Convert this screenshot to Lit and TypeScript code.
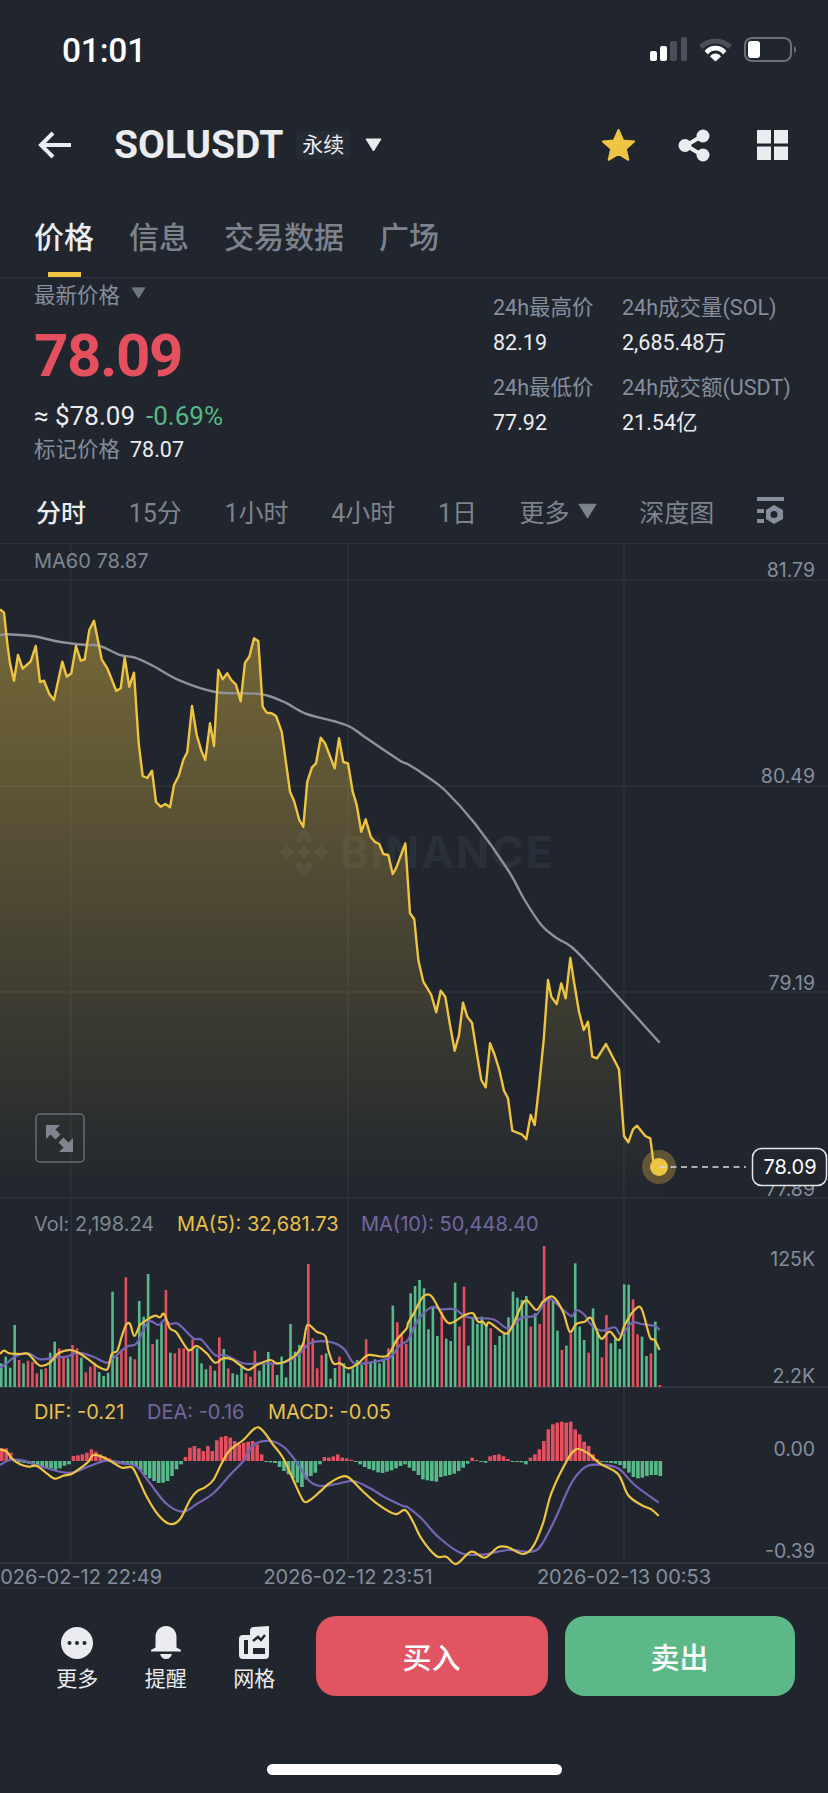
import { css, html, LitElement, svg } from "lit";
import { customElement } from "lit/decorators.js";

// series are read off zoomed crops: flat x,y lists, scaled 3x from an origin
const scale = (pts: number[], ox: number, oy: number) => {
	const out: [number, number][] = [];
	for (let i = 0; i < pts.length; i += 2) out.push([ox + pts[i] / 3, oy + pts[i + 1] / 3]);
	return out;
};
const toD = (pts: [number, number][]) =>
	"M" + pts.map(([x, y]) => `${x.toFixed(1)} ${y.toFixed(1)}`).join("L");

// averages are smooth in the app, so run them through a catmull-rom curve
const toCurve = (pts: [number, number][]) => {
	let d = `M${pts[0][0].toFixed(1)} ${pts[0][1].toFixed(1)}`;
	for (let i = 0; i < pts.length - 1; i++) {
		const p0 = pts[Math.max(i - 1, 0)];
		const p1 = pts[i];
		const p2 = pts[i + 1];
		const p3 = pts[Math.min(i + 2, pts.length - 1)];
		const c1x = p1[0] + (p2[0] - p0[0]) / 6;
		const c1y = p1[1] + (p2[1] - p0[1]) / 6;
		const c2x = p2[0] - (p3[0] - p1[0]) / 6;
		const c2y = p2[1] - (p3[1] - p1[1]) / 6;
		d += `C${c1x.toFixed(1)} ${c1y.toFixed(1)} ${c2x.toFixed(1)} ${c2y.toFixed(1)} ${p2[0].toFixed(1)} ${p2[1].toFixed(1)}`;
	}
	return d;
};

const price: [number, number][] = [
	...scale(
		[0,148,12,158,22,250,30,310,42,362,54,285,68,326,92,304,107,258,120,366,132,362,148,402,162,420,187,305,200,350,214,340,228,258,242,302,254,298,268,210,282,182,305,298,322,325,349,393,362,385,374,293,388,380,402,338,416,550,428,648,442,654,456,632,468,726,482,740,496,732,510,742,522,675,536,648,550,600,562,576,576,438,590,525,604,572,616,600,630,490,642,558,655,330,668,358,682,340,694,360,708,374,722,424,735,308,748,290,762,235,775,243,788,440,800,458,815,460,828,468,845,515,870,695,882,722,898,780,910,800,922,665,936,622,948,610,962,533,975,550,1004,625,1017,535,1030,606,1044,610,1058,695,1070,735,1084,815,1097,778,1112,830,1124,845,1138,852,1150,882,1165,885],
		0, 560,
	),
	...scale([38,132,48,115,76,40,90,250,103,268,115,390,130,455], 380, 830),
	...scale(
		[70,45,85,97,98,32,112,50,125,130,140,212,153,165,165,68,178,110,192,128,205,210,220,300,233,322,246,190,260,225,274,270,288,332,300,355,313,452,328,458,341,463,355,478,368,405,380,435,393,320,407,180,420,0,430,50,446,72,460,10,473,55,487,-66,497,0,513,95,527,150,540,125,553,230,567,235,594,192,633,268,648,468,661,487,675,448,687,437,712,468,727,475,738,560,753,562],
		408, 980,
	),
];

const ma60: [number, number][] = [
	...scale([0,225,20,223,60,225,110,230,165,243,210,250,260,255,300,258,360,285,405,293,460,318,540,362,650,397,780,402,850,425,915,460,1000,483,1050,500,1100,535,1200,602], 0, 560),
	...scale([0,253,50,285,110,330,200,430,300,570,350,660,400,735,440,770,490,800,530,840,585,900], 408, 680),
	...scale([755,188], 408, 980),
];

// top of each volume bar in crop px, negative means a red bar
const volume = [
	490,470,503,375,-480,490,-482,-486,-520,508,-505,458,425,-445,-470,475,-435,-445,473,-517,-500,-490,516,528,518,275,470,-450,-232,470,-478,303,350,222,-432,418,370,-270,458,-460,-445,-445,-447,-418,445,490,508,-497,512,-412,447,-505,520,524,500,-520,-530,-452,512,490,456,-490,525,470,532,372,455,435,-430,-192,-415,-505,-465,460,536,504,-470,490,520,505,480,495,-418,488,478,490,480,-445,317,-367,-405,-432,
	280,258,240,265,388,320,408,-335,416,423,248,-380,-260,437,350,372,350,375,-385,435,408,400,352,275,293,300,288,-380,340,-372,-138,-295,300,392,-450,437,-400,190,380,420,-458,325,395,-472,-345,430,415,447,253,254,-298,-403,410,468,-460,365,-555,
];

const volMa5: [number, number][] = [
	...scale([0,462,12,452,28,460,60,462,85,462,110,490,125,498,150,488,175,460,210,450,235,458,265,478,295,500,322,508,335,462,352,452,365,410,378,375,390,372,403,408,420,375,440,360,465,347,480,352,492,342,510,385,530,398,565,450,590,438,620,460,645,488,670,475,695,478,720,495,745,510,770,495,810,480,830,490,855,485,890,462,910,430,922,375,950,395,976,408,985,450,1000,490,1020,490,1045,505,1075,490,1105,465,1160,468,1190,420,1220,385], 0, 1200),
	...scale([0,370,20,335,45,290,70,288,100,340,125,370,170,345,195,340,210,365,225,365,235,378,245,368,290,400,310,385,350,303,385,330,405,305,435,290,465,335,485,395,505,372,530,365,550,355,578,415,605,395,632,420,650,375,675,335,700,325,725,410,740,420,755,450], 408, 1200),
];
const volMa10: [number, number][] = [
	...scale([0,503,20,490,45,470,85,460,120,478,170,472,200,470,235,458,280,470,320,488,345,470,380,440,410,430,445,365,475,375,495,358,510,372,535,372,580,415,605,420,645,465,675,465,730,490,780,490,850,488,900,460,930,430,985,425,1030,445,1060,488,1090,490,1165,475,1200,435], 0, 1200),
	...scale([0,420,30,360,70,322,100,328,140,328,180,352,255,358,300,385,340,355,385,345,410,305,430,298,450,315,490,348,505,330,530,345,545,370,580,392,620,382,640,405,672,368,700,372,740,378,755,390], 408, 1200),
];

// MACD histogram in crop px around the zero line, positive is red and upward
const macdBars = [
	38,38,25,-3,-4,-6,-8,-12,-14,-16,-20,-22,-26,-22,-14,-10,15,17,20,25,35,28,20,14,8,-4,-8,-10,-12,-10,-15,-28,-42,-52,-60,-66,-65,-60,-45,-25,-10,12,40,45,38,30,45,30,62,72,75,70,60,50,55,58,60,50,20,-3,-4,-6,-18,-30,-40,-52,-65,-78,-55,-45,-35,-10,12,10,14,20,10,8,4,-3,-10,-18,-24,-28,-34,-36,-32,-28,-22,-15,-10,
	-20,-30,-42,-55,-58,-60,-62,-48,-45,-42,-38,-30,-20,-8,10,3,-3,-5,14,18,20,14,6,-3,-3,-4,-10,10,20,35,60,95,110,115,118,115,118,95,80,58,45,20,5,-3,-4,-6,-8,-12,-22,-35,-48,-52,-50,-45,-42,-42,-45,
];
const dif: [number, number][] = [
	...scale([0,208,20,215,35,235,60,253,85,260,110,258,140,280,165,296,190,287,215,282,240,265,265,245,280,225,305,230,335,245,365,263,395,262,410,285,440,350,475,405,510,432,540,418,570,360,590,335,615,322,640,300,665,250,690,210,730,180,775,142,820,195,850,235,880,300,910,362,930,360,960,335,985,312,1020,292,1045,292,1090,335,1130,370,1185,402,1215,390], 0, 1380),
	...scale([15,395,40,445,85,498,115,500,145,522,190,485,230,503,270,472,300,472,345,492,375,470,405,400,430,310,475,215,505,178,540,190,575,220,630,252,660,315,700,345,730,358,752,378], 408, 1390),
];
const dea: [number, number][] = [
	...scale([0,255,30,240,70,242,110,255,170,273,215,278,270,258,320,242,370,250,410,260,450,310,500,372,550,395,590,372,640,340,690,285,730,243,760,195,810,183,850,200,885,240,925,300,960,318,1010,312,1060,303,1110,325,1160,355,1210,378], 0, 1380),
	...scale([0,352,40,385,90,440,160,490,230,493,300,480,370,485,400,465,440,390,490,280,530,232,570,224,630,235,680,285,752,338], 408, 1390),
];

const GREEN = "#58b98a";
const RED = "#e4505f";
const barX = (i: number, n: number, first: number, last: number) =>
	first + (i * (last - first)) / (n - 1);

@customElement("app-root")
export class AppRoot extends LitElement {
	static override styles = css`
		:host {
			display: block;
			width: 828px;
			height: 1793px;
			overflow: hidden;
			background: #21262e;
			color: #eaecef;
			font-family: Roboto, "Noto Sans CJK SC", sans-serif;
		}

		.status {
			height: 100px;
			padding: 0 32px 0 62px;
			box-sizing: border-box;
			display: flex;
			align-items: center;
			justify-content: space-between;
		}
		.time {
			font-size: 33.5px;
			font-weight: 500;
			color: #fff;
			letter-spacing: -0.2px;
		}

		.header {
			height: 90px;
			display: flex;
			align-items: center;
			padding: 0 40px 0 38px;
		}
		.title {
			font-size: 39px;
			font-weight: 700;
			margin-left: 42px;
		}
		.badge {
			font-size: 21px;
			margin-left: 13px;
			padding: 0 6px;
			height: 28px;
			line-height: 28px;
			background: #262c35;
			border-radius: 3px;
		}
		.drop {
			margin-left: 15px;
			display: flex;
		}
		.header-icons {
			margin-left: auto;
			display: flex;
			align-items: center;
			gap: 42px;
		}
		.header-icons .share {
			margin-right: 4px;
		}

		.tabs {
			display: flex;
			gap: 35px;
			padding: 33px 0 0 34px;
			height: 88px;
			box-sizing: border-box;
			border-bottom: 1px solid #2e343c;
		}
		.tab {
			font-size: 30px;
			line-height: 30px;
			color: #7d838d;
			font-weight: 500;
			display: flex;
			flex-direction: column;
			align-items: center;
		}
		.tab.on {
			color: #eaecef;
		}
		.tab i {
			display: block;
			width: 33px;
			height: 5px;
			margin-top: 19px;
			background: #eec443;
		}

		.quote {
			height: 200px;
			display: flex;
			justify-content: space-between;
			padding-left: 34px;
		}
		.last-label {
			height: 30px;
			display: flex;
			align-items: center;
			gap: 11px;
			font-size: 21.5px;
			color: #848e9c;
		}
		.big {
			font-size: 60px;
			line-height: 60px;
			font-weight: 700;
			color: #e5505f;
			margin-top: 18px;
			letter-spacing: -1.4px;
		}
		.fiat {
			display: flex;
			gap: 11px;
			font-size: 26px;
			line-height: 30px;
			margin-top: 15px;
		}
		.chg {
			color: #55b886;
		}
		.mark {
			display: flex;
			gap: 10px;
			font-size: 21.5px;
			line-height: 30px;
			margin-top: 4px;
			color: #848e9c;
		}
		.mark b {
			font-weight: 400;
			color: #eaecef;
		}
		.stats {
			width: 335px;
			padding-top: 15px;
			display: grid;
			grid-template-columns: 129px auto;
			grid-auto-rows: 65px;
			row-gap: 15px;
			font-size: 21.5px;
			line-height: 30px;
		}
		.stats span {
			display: block;
			color: #848e9c;
			white-space: nowrap;
		}
		.stats b {
			display: block;
			margin-top: 5px;
			font-weight: 400;
		}

		.intervals {
			height: 66px;
			box-sizing: border-box;
			padding: 0 42px 0 36px;
			display: flex;
			align-items: center;
			justify-content: space-between;
			border-bottom: 1px solid #2e343c;
			font-size: 25px;
			color: #7d838d;
		}
		.intervals .on {
			color: #eaecef;
			font-weight: 500;
		}
		.more {
			display: flex;
			align-items: center;
			gap: 8px;
		}

		.chart {
			display: block;
		}
		.chart text {
			font-family: Inter, "Liberation Sans", sans-serif;
			font-size: 20px;
		}
		.chart .axis {
			font-size: 19.5px;
			fill: #848e9c;
			text-anchor: end;
		}
		.chart .time-label {
			fill: #848e9c;
			text-anchor: middle;
		}
		.chart .grey {
			fill: #7f8791;
		}
		.chart .yellow {
			fill: #e8c04c;
		}
		.chart .purple {
			fill: #74669f;
		}
		.chart .mark-text {
			font-size: 20px;
			fill: #fff;
			text-anchor: middle;
		}
		.chart .watermark {
			font-size: 44px;
			font-weight: 700;
			fill: #2a3039;
			letter-spacing: 2px;
		}

		.actions {
			height: 175px;
			box-sizing: border-box;
			padding: 27px 33px 0 33px;
			display: flex;
			align-items: flex-start;
		}
		.tool {
			width: 88.5px;
			margin-top: 10px;
			display: flex;
			flex-direction: column;
			align-items: center;
			font-size: 21px;
			line-height: 30px;
		}
		.tool svg {
			display: block;
			margin-bottom: 4px;
		}
		.btn {
			height: 80px;
			border-radius: 20px;
			display: flex;
			align-items: center;
			justify-content: center;
			font-size: 29px;
			font-weight: 500;
			color: #fff;
		}
		.buy {
			width: 232px;
			margin-left: 17px;
			background: #e15563;
		}
		.sell {
			width: 230px;
			margin-left: 17px;
			background: #5cb887;
		}
		.home {
			width: 295px;
			height: 11px;
			margin: 0 auto;
			border-radius: 6px;
			background: #fff;
		}
	`;

	private renderChart() {
		const area = `${toD(price)}L${price[price.length - 1][0]} 1198L0 1198Z`;
		return html`<svg
			class="chart"
			width="828"
			height="1045"
			viewBox="0 544 828 1045"
		>
			<defs>
				<linearGradient id="fill" gradientUnits="userSpaceOnUse" x1="0" y1="605" x2="0" y2="1198">
					<stop offset="0" stop-color="#f0c644" stop-opacity="0.42" />
					<stop offset="1" stop-color="#f0c644" stop-opacity="0" />
				</linearGradient>
			</defs>
			${[580, 786, 992, 1198].map(
				(y) => svg`<line x1="0" x2="828" y1=${y} y2=${y} stroke="#333941" />`,
			)}
			<line x1="0" x2="828" y1="1387" y2="1387" stroke="#363c44" stroke-width="1.5" />
			<line x1="0" x2="828" y1="1563" y2="1563" stroke="#363c44" stroke-width="1.5" />
			<line x1="0" x2="828" y1="1588" y2="1588" stroke="#2e343c" />
			${[71, 348, 624].map(
				(x) => svg`<line x1=${x} x2=${x} y1="544" y2="1563" stroke="#30363e" />`,
			)}

			<g fill="#2a3039" transform="translate(304 852)">
				<path d="M0 -24L10 -14L5 -9L0 -14L-5 -9L-10 -14Z" />
				<path d="M0 24L10 14L5 9L0 14L-5 9L-10 14Z" />
				<path d="M-24 0L-17 -7L-10 0L-17 7Z" />
				<path d="M24 0L17 -7L10 0L17 7Z" />
				<path d="M0 -6L6 0L0 6L-6 0Z" />
			</g>
			<text class="watermark" x="340" y="868">BINANCE</text>

			<path d=${area} fill="url(#fill)" />
			<path d=${toCurve(ma60)} fill="none" stroke="#8d929b" stroke-width="2.4" />
			<path d=${toD(price)} fill="none" stroke="#eec443" stroke-width="2.4" stroke-linejoin="round" />

			<circle cx="659" cy="1167" r="17" fill="#eec443" fill-opacity="0.3" />
			<circle cx="659" cy="1167" r="9" fill="#eec443" />
			<line x1="660" x2="746" y1="1167" y2="1167" stroke="#d9dce0" stroke-width="1.5" stroke-dasharray="6 4.5" />

			<text class="grey" x="34" y="568">MA60 78.87</text>
			<text class="axis" x="815" y="577">81.79</text>
			<text class="axis" x="815" y="783">80.49</text>
			<text class="axis" x="815" y="990">79.19</text>
			<text class="axis" x="815" y="1196">77.89</text>
			<rect x="752.5" y="1148.5" width="74" height="37" rx="9" fill="#21262e" stroke="#e4e6e9" stroke-width="1.5" />
			<text class="mark-text" x="790" y="1174">78.09</text>

			<rect x="36" y="1114" width="48" height="48" rx="4" fill="none" stroke="#666c76" stroke-width="1.5" />
			<g fill="#7f858e">
				<path d="M46 1125h14l-4.500 4.500 5 5-5 5-5-5-4.500 4.500z" />
				<path d="M73 1152h-14l4.500-4.500-5-5 5-5 5 5 4.500-4.500z" />
			</g>

			<text class="grey" x="34" y="1231">Vol: 2,198.24</text>
			<text class="yellow" x="177" y="1231">MA(5): 32,681.73</text>
			<text class="purple" x="361" y="1231">MA(10): 50,448.40</text>
			<text class="axis" x="815" y="1266">125K</text>
			<text class="axis" x="815" y="1383">2.2K</text>
			${volume.map((v, i) => {
				const top = 1200 + Math.abs(v) / 3;
				return svg`<rect
					x=${barX(i, volume.length, 0, 658.5)}
					y=${top}
					width="2.6"
					height=${1387 - top}
					fill=${v < 0 ? RED : GREEN}
				/>`;
			})}
			<path d=${toCurve(volMa10)} fill="none" stroke="#7565b4" stroke-width="2.2" />
			<path d=${toCurve(volMa5)} fill="none" stroke="#eec443" stroke-width="2.2" />

			<text class="yellow" x="34" y="1419">DIF: -0.21</text>
			<text class="purple" x="147" y="1419">DEA: -0.16</text>
			<text class="yellow" x="268" y="1419">MACD: -0.05</text>
			<text class="axis" x="815" y="1456">0.00</text>
			<text class="axis" x="815" y="1558">-0.39</text>
			${macdBars.map((v, i) => {
				const h = Math.abs(v) / 3;
				return svg`<rect
					x=${barX(i, macdBars.length, 0, 658.5)}
					y=${v > 0 ? 1461 - h : 1461}
					width="3.6"
					height=${h}
					fill=${v > 0 ? RED : GREEN}
				/>`;
			})}
			<path d=${toCurve(dea)} fill="none" stroke="#7565b4" stroke-width="2.2" />
			<path d=${toCurve(dif)} fill="none" stroke="#eec443" stroke-width="2.2" />

			<text class="time-label" x="75" y="1584">2026-02-12 22:49</text>
			<text class="time-label" x="348" y="1584">2026-02-12 23:51</text>
			<text class="time-label" x="624" y="1584">2026-02-13 00:53</text>
		</svg>`;
	}

	override render() {
		const drop = (fill: string, w = 17, h = 14) => html`<svg width=${w} height=${h} viewBox="0 0 17 14">
			<path d="M1 1h15L8.500 13z" fill=${fill} stroke=${fill} stroke-linejoin="round" />
		</svg>`;

		return html`
			<div class="status">
				<span class="time">01:01</span>
				<svg width="146" height="26" viewBox="0 0 146 26">
					<g fill="#fff">
						<rect x="0" y="14" width="7" height="10" rx="2" />
						<rect x="10" y="9" width="7" height="15" rx="2" />
					</g>
					<g fill="#4b5058">
						<rect x="20" y="4" width="7" height="20" rx="2" />
						<rect x="31" y="0" width="6" height="24" rx="2" />
						<path d="M49 8a24 24 0 0 1 33 0l-3.500 4a18 18 0 0 0-26 0z" />
					</g>
					<path d="M54.500 14a14 14 0 0 1 22 0l-3.500 3.500a9 9 0 0 0-15 0z" fill="#fff" />
					<path d="M60 19.500a6.500 6.500 0 0 1 11 0l-5.500 5z" fill="#fff" />
					<rect x="95" y="1" width="46" height="23" rx="7" fill="none" stroke="#6b7077" stroke-width="2" />
					<rect x="98" y="4" width="12" height="17" rx="3" fill="#fff" />
					<path d="M144 9c1.500 .5 2 2 2 3.500s-.5 3-2 3.500z" fill="#6b7077" />
				</svg>
			</div>

			<div class="header">
				<svg width="34" height="28" viewBox="0 0 34 28">
					<path d="M33 14H4M15 2L3 14l12 12" fill="none" stroke="#eaecef" stroke-width="4" />
				</svg>
				<span class="title">SOLUSDT</span>
				<span class="badge">永续</span>
				<span class="drop">${drop("#eaecef")}</span>
				<span class="header-icons">
					<svg width="35" height="34" viewBox="0 0 35 34">
						<path
							d="M17.500 2l4.600 10.400 11 1-8.300 7.400 2.500 11-9.800-5.800-9.800 5.800 2.500-11L1.900 13.400l11-1z"
							fill="#eec443"
							stroke="#eec443"
							stroke-width="2"
							stroke-linejoin="round"
						/>
					</svg>
					<svg class="share" width="33" height="33" viewBox="0 0 33 33">
						<path d="M24 7L8 16.500 24 26" fill="none" stroke="#eaecef" stroke-width="4" />
						<circle cx="25" cy="7" r="6.500" fill="#eaecef" />
						<circle cx="7" cy="16.500" r="6.500" fill="#eaecef" />
						<circle cx="25" cy="26" r="6.500" fill="#eaecef" />
					</svg>
					<svg width="31" height="30" viewBox="0 0 31 30" fill="#eaecef">
						<rect width="14" height="13.500" />
						<rect x="17" width="14" height="13.500" />
						<rect y="16.500" width="14" height="13.500" />
						<rect x="17" y="16.500" width="14" height="13.500" />
					</svg>
				</span>
			</div>

			<div class="tabs">
				<div class="tab on">价格<i></i></div>
				<div class="tab">信息</div>
				<div class="tab">交易数据</div>
				<div class="tab">广场</div>
			</div>

			<div class="quote">
				<div>
					<div class="last-label">最新价格 ${drop("#6f7680", 15, 12)}</div>
					<div class="big">78.09</div>
					<div class="fiat"><span>≈ $78.09</span><span class="chg">-0.69%</span></div>
					<div class="mark">标记价格 <b>78.07</b></div>
				</div>
				<div class="stats">
					<div><span>24h最高价</span><b>82.19</b></div>
					<div><span>24h成交量(SOL)</span><b>2,685.48万</b></div>
					<div><span>24h最低价</span><b>77.92</b></div>
					<div><span>24h成交额(USDT)</span><b>21.54亿</b></div>
				</div>
			</div>

			<div class="intervals">
				<span class="on">分时</span>
				<span>15分</span>
				<span>1小时</span>
				<span>4小时</span>
				<span>1日</span>
				<span class="more">更多 ${drop("#7d838d", 19, 16)}</span>
				<span>深度图</span>
				<svg width="29" height="27" viewBox="0 0 29 27" fill="#848e9c">
					<rect width="27" height="4" />
					<rect y="12" width="7" height="4" />
					<rect y="22" width="7" height="4" />
					<path
						fill-rule="evenodd"
						d="M17 8l9 5v9l-9 5-8-5v-9zM17 14a3.500 3.500 0 1 0 0 7 3.500 3.500 0 0 0 0-7z"
					/>
				</svg>
			</div>

			${this.renderChart()}

			<div class="actions">
				<div class="tool">
					<svg width="32" height="34" viewBox="0 0 32 34">
						<ellipse cx="16" cy="17" rx="16" ry="16" fill="#eaecef" />
						<g fill="#21262e">
							<circle cx="8.500" cy="17" r="2" />
							<circle cx="16" cy="17" r="2" />
							<circle cx="23.500" cy="17" r="2" />
						</g>
					</svg>
					更多
				</div>
				<div class="tool">
					<svg width="32" height="34" viewBox="0 0 32 34" fill="#eaecef">
						<path d="M16 0c6.500 0 10.500 5 10.500 11v10.500L31 24v1.500H1V24l4.500-2.500V11C5.500 5 9.500 0 16 0z" />
						<path d="M10 28h12c-1 3-3 5-6 5s-5-2-6-5z" />
					</svg>
					提醒
				</div>
				<div class="tool">
					<svg width="31" height="34" viewBox="0 0 31 34">
						<path
							d="M30 0v29a4 4 0 0 1-4 4H4a4 4 0 0 1-4-4V13a4 4 0 0 1 4-4h7V5a4 4 0 0 1 4-4z"
							fill="#eaecef"
						/>
						<path d="M14 15l5-4 3 3 4-5" fill="none" stroke="#21262e" stroke-width="2.500" />
						<rect x="5" y="14" width="4" height="14" fill="#21262e" />
						<rect x="14" y="22" width="12" height="6" fill="#21262e" />
					</svg>
					网格
				</div>
				<div class="btn buy">买入</div>
				<div class="btn sell">卖出</div>
			</div>
			<div class="home"></div>
		`;
	}
}
